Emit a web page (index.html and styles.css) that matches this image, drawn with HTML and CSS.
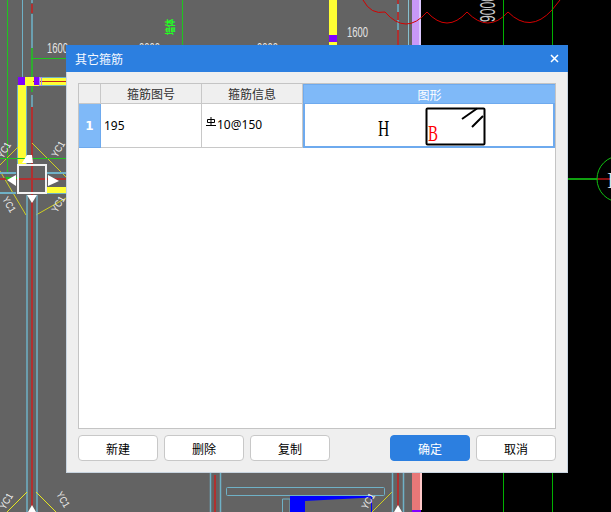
FILE: index.html
```html
<!DOCTYPE html>
<html lang="zh">
<head>
<meta charset="utf-8">
<title>其它箍筋</title>
<link rel="stylesheet" href="styles.css">
</head>
<body>
<div class="desktop">
  <svg class="cad" width="611" height="512" viewBox="0 0 611 512">
    <rect x="0" y="0" width="421" height="512" fill="#636363"/>
    <rect x="421" y="0" width="190" height="512" fill="#000"/>

    <!-- axis lines left -->
    <g fill="none" stroke-width="1">
      <path d="M7.500 0V172M182.500 0V46" stroke="#1fc41f"/>
      <path d="M22.500 0V77" stroke="#6fb1c6"/>
      <path d="M32 4V13M32 107V165" stroke="#b03030" stroke-width="2"/>
      <path d="M32 0V3M32 14V48M32 95V107" stroke="#6b9fb0" stroke-width="2"/>
      <path d="M32 48V92" stroke="#1fc41f" stroke-width="1.500"/>
      <path d="M31 58.500H66" stroke="#1fc41f"/>
    </g>
    <text class="dim" transform="translate(47 53) scale(.63 1)">1600</text>
    <text class="dim" transform="translate(139 53) scale(.63 1)">0000</text>
    <text class="dim" transform="translate(257 53) scale(.63 1)">0000</text>
    <text class="tag-green" transform="translate(174 35) rotate(-90) scale(.8 1)">墙体</text>

    <!-- yellow wall -->
    <rect x="18" y="77" width="48" height="9" fill="#ffff33"/>
    <rect x="18" y="77" width="8" height="88" fill="#ffff33"/>
    <rect x="17" y="85" width="1" height="80" fill="#6fb1c6"/>
    <rect x="26" y="86" width="1" height="78" fill="#6fb1c6"/>
    <path d="M40 77.500H66M40 85.500H66" stroke="#6fb1c6"/>
    <path d="M33 81.500H66" stroke="#c62020"/>
    <rect x="18" y="77" width="7" height="8" fill="#8000ff"/>
    <rect x="34" y="77" width="5" height="8" fill="#8000ff"/>
    <rect x="39.500" y="77.500" width="2" height="8" fill="none" stroke="#a58cf0"/>

    <!-- column node -->
    <g fill="none" stroke="#d0d020">
      <path d="M32 143L66 177M18 147L0 165M0 171L26 215M66 198L36 215"/>
    </g>
    <path d="M0 158.500H66" stroke="#1fc41f"/>
    <path d="M0 173H16M0 193H16M46 173H66M46 193H66" fill="none" stroke="#6fb1c6" stroke-width="2"/>
    <rect x="46" y="187" width="20" height="6" fill="#ffff33"/>
    <path d="M27 195V512M37 195V512" stroke="#6fb1c6" stroke-width="1.500" fill="none"/>
    <path d="M32 193V510M0 179H18M46 179H66" stroke="#b03030" stroke-width="2" fill="none"/>
    <path d="M6 178H18" stroke="#1fc41f" stroke-width="2"/>
    <circle cx="7" cy="178" r="1.500" fill="#1fc41f"/>
    <rect x="18" y="165" width="28" height="28" fill="#636363" stroke="#f2f2f2" stroke-width="2"/>
    <path d="M32 166V192M19 179H45" stroke="#b03030" stroke-width="2"/>
    <path d="M22 163L27 155L32 155L33 163Z" fill="#fff"/>
    <path d="M48 175V186L59 181Z" fill="#fff"/>
    <path d="M16 175V186L7 180Z" fill="#fff"/>
    <path d="M27 195H37L32 203Z" fill="#fff"/>
    <text class="yc" transform="translate(3 159) rotate(-60) scale(.85 1)">YC1</text>
    <text class="yc" transform="translate(57 158) rotate(-60) scale(.85 1)">YC1</text>
    <text class="yc" transform="translate(2 199) rotate(60) scale(.85 1)">YC1</text>
    <text class="yc" transform="translate(57 213) rotate(-60) scale(.85 1)">YC1</text>

    <!-- top right of the grey area -->
    <rect x="329" y="0" width="8" height="45" fill="#ffff33"/>
    <rect x="329" y="35" width="8" height="7" fill="#8000ff"/>
    <text class="dim" transform="translate(347 37) scale(.63 1)">1600</text>
    <path d="M398 0V45" stroke="#c62020" stroke-width="1.500"/>
    <path d="M398 4V12M398 20V30" stroke="#6b9fb0" stroke-width="2"/>
    <path d="M408.500 0V45" stroke="#87c0d0"/>
    <rect x="412" y="0" width="7" height="45" fill="#c898f8"/>
    <rect x="419" y="0" width="2" height="45" fill="#dcc8ff"/>
    <path d="M363 0Q371 15 385 12Q406 36 427 12Q447 34 467 12Q488 34 508 12Q530 34 552 10L560 0" fill="none" stroke="#d40000"/>
    <path d="M503.500 0V45M552.500 0V45M503.500 473V512M552.500 473V512" stroke="#00b000"/>
    <text class="tall" transform="translate(495 22) rotate(-90) scale(.55 1)">9000</text>

    <!-- right axis bubble -->
    <path d="M568 179H597" stroke="#10a010" stroke-width="2"/>
    <path d="M597 179H611" stroke="#8a1010" stroke-width="2"/>
    <circle cx="620" cy="179" r="23" fill="none" stroke="#10c010" stroke-width="1"/>
    <text class="axis" x="607" y="188">I</text>

    <!-- bottom -->
    <path d="M36 492L56 512M7 512L27 492" fill="none" stroke="#e8e820"/>
    <path d="M28 512L32 505L36 512Z" fill="#fff"/>
    <text class="yc" transform="translate(5 510) rotate(-60) scale(.85 1)">YC1</text>
    <text class="yc" transform="translate(56 494) rotate(60) scale(.85 1)">YC1</text>
    <path d="M210.500 472V512M220.500 472V512" stroke="#6fb1c6" stroke-width="1.500"/>
    <path d="M215 475V512" stroke="#b03030" stroke-width="2"/>
    <rect x="226.500" y="487.500" width="158" height="8" rx="1" fill="none" stroke="#6fb1c6"/>
    <path d="M282.500 512V499H290V512" fill="none" stroke="#6fb1c6"/>
    <path d="M290 496H372V512H371V497.500L305 501V512H290Z" fill="#0000ff"/>
    <text class="yc" transform="translate(367 510) rotate(-60) scale(.85 1)">YC1</text>
    <path d="M372 512L392 492" stroke="#d0d020"/>
    <path d="M392.500 472V512M403.500 472V512" stroke="#6fb1c6" stroke-width="1.500"/>
    <path d="M398 472V510" stroke="#b03030" stroke-width="2"/>
    <path d="M394 512L398 505L402 512Z" fill="#fff"/>
    <rect x="412" y="472" width="8" height="38" fill="#e87878"/>
    <rect x="412" y="510" width="9" height="2" fill="#8000ff"/>
    <rect x="420" y="472" width="2" height="38" fill="#ffc8c8"/>
  </svg>

  <section class="dialog">
    <header class="titlebar">
      <span class="title">其它箍筋</span>
      <svg class="close" width="9" height="9" viewBox="0 0 9 9"><path d="M1 1L8 8M8 1L1 8" stroke="#fff" stroke-width="1.500"/></svg>
    </header>
    <div class="body">
      <div class="grid">
        <div class="cell corner"></div>
        <div class="cell head">箍筋图号</div>
        <div class="cell head">箍筋信息</div>
        <div class="cell head active">图形</div>
        <div class="cell rownum">1</div>
        <div class="cell data">195</div>
        <div class="cell data info">
          <svg class="grade" width="10" height="10" viewBox="0 0 10 10"><path d="M5 0V8M1.500 2.500H8.500V5.500H1.500ZM0 8.500H10" fill="none" stroke="#000" stroke-width="1"/></svg><span>10@150</span>
        </div>
        <div class="cell figure">
          <svg width="248" height="42" viewBox="0 0 248 42">
            <text class="fig-h" transform="translate(73 32) scale(.68 1)">H</text>
            <rect x="121.500" y="4.500" width="58" height="36" rx="1" fill="#fff" stroke="#000" stroke-width="2"/>
            <path d="M157 15L172 4.500M167 23L178 12" stroke="#000" stroke-width="2" fill="none"/>
            <text class="fig-b" transform="translate(123 37) scale(.65 1)">B</text>
          </svg>
        </div>
      </div>
      <footer class="actions">
        <button class="btn" type="button">新建</button>
        <button class="btn" type="button">删除</button>
        <button class="btn" type="button">复制</button>
        <span class="spacer"></span>
        <button class="btn primary" type="button">确定</button>
        <button class="btn" type="button">取消</button>
      </footer>
    </div>
  </section>
</div>
</body>
</html>
```

FILE: styles.css
```css
* { box-sizing: border-box; }
html, body { margin: 0; padding: 0; }
body { width: 611px; height: 512px; overflow: hidden; background: #000; }
.desktop { position: relative; width: 611px; height: 512px; overflow: hidden; font-family: "Noto Sans CJK SC", "Liberation Sans", sans-serif; font-size: 12px; }
.cad { position: absolute; left: 0; top: 0; display: block; }
.dim { font-family: "Liberation Sans", sans-serif; font-size: 15px; fill: #e4e4e4; }
.tall { font-family: "Liberation Sans", sans-serif; font-size: 22px; fill: #c8c8c8; }
.axis { font-family: "Liberation Serif", serif; font-size: 24px; fill: #e4e4e4; }
.yc { font-family: "Liberation Sans", sans-serif; font-size: 10px; fill: #f0f0f0; }
.tag-green { font-size: 10px; font-weight: 700; fill: #22ff22; }

.dialog { position: absolute; left: 66px; top: 45px; width: 502px; height: 428px; display: flex; flex-direction: column; background: #efefef; border: 1px solid #c8d4e0; border-top: 0; }
.titlebar { flex: 0 0 27px; margin: 0 -1px; display: flex; align-items: center; justify-content: space-between; padding: 0 9px; background: #2c7fe0; color: #f4f8ff; }
.title { font-size: 12px; line-height: 27px; }
.close { display: block; }
.body { flex: 1; display: flex; flex-direction: column; padding: 11px; }

.grid { height: 346px; display: grid; grid-template-columns: 22px 101px 101px 1fr; grid-template-rows: 20px 44px; align-content: start; background: #fff; border: 1px solid #c4c4c4; }
.cell { display: flex; align-items: center; border-right: 1px solid #c8c8c8; border-bottom: 1px solid #c8c8c8; }
.corner { background: #efefef; }
.head { justify-content: center; background: #efefef; color: #303030; font-size: 12px; }
.head.active { background: #7fb9f8; color: #fff; border: 1px solid #6eaaee; border-right: 0; }
.rownum { justify-content: center; background: #7fb9f8; color: #fff; font-family: "DejaVu Sans", sans-serif; font-weight: 700; font-size: 12px; border-color: #6eaaee; }
.data { padding-left: 3px; font-family: "Noto Sans", sans-serif; font-size: 12px; color: #000; }
.info { padding-left: 4px; padding-bottom: 2px; }
.grade { display: block; margin-top: -5px; margin-right: 1px; flex: none; }
.figure { border: 2px solid #6eaaee; border-top: 0; overflow: hidden; background: #fff; }
.figure svg { display: block; }
.fig-h { font-family: "Liberation Serif", serif; font-size: 23px; fill: #000; }
.fig-b { font-family: "Liberation Serif", serif; font-size: 23px; fill: #ff0000; }

.actions { margin-top: 6px; display: flex; gap: 6px; height: 26px; }
.btn { width: 80px; height: 26px; padding: 0; background: #fff; border: 1px solid #c8c8c8; border-radius: 4px; color: #000; font-family: inherit; font-size: 12px; }
.spacer { flex: 1; }
.primary { background: #2c7fe0; border-color: #2c7fe0; color: #fff; }
```
